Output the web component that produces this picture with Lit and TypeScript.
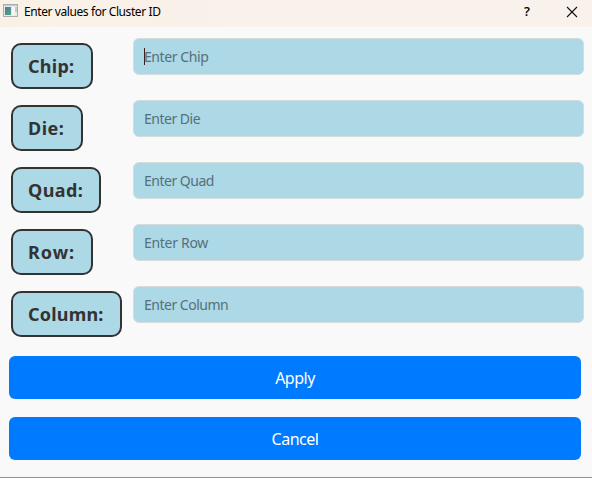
import { LitElement, html, css } from "lit";
import { customElement } from "lit/decorators.js";

interface Field {
  name: string;
  width: number;
  labelSpacing: number;
  hintSpacing: number;
}

const FIELDS: Field[] = [
  { name: "Chip", width: 82, labelSpacing: 0.25, hintSpacing: -0.42 },
  { name: "Die", width: 72, labelSpacing: 0.45, hintSpacing: -0.5 },
  { name: "Quad", width: 90, labelSpacing: 0.4, hintSpacing: -0.5 },
  { name: "Row", width: 82, labelSpacing: 1, hintSpacing: -0.3 },
  { name: "Column", width: 111, labelSpacing: 0.2, hintSpacing: -0.5 },
];

@customElement("title-bar")
class TitleBar extends LitElement {
  static styles = css`
    :host {
      display: flex;
      align-items: center;
      box-sizing: border-box;
      height: 27px;
      padding: 0 14px 3px 3px;
      background: linear-gradient(90deg, #faf1e6, #f9f1eb 50%);
      color: #000;
      font: 12px/20px "Noto Sans", "Open Sans", sans-serif;
    }
    .app-icon { flex: none; margin-right: 5px; margin-top: -2px; }
    .title { flex: 1; letter-spacing: -0.41px; white-space: nowrap; }
    .help { margin-right: 36px; font: 600 13px/18px "Open Sans", sans-serif; margin-top: -2px; }
    .close { flex: none; margin-top: -1px; }
  `;

  render() {
    return html`
      <svg class="app-icon" width="16" height="14" viewBox="0 0 16 14">
        <defs>
          <linearGradient id="pane" x1="0" y1="0" x2="1" y2="1">
            <stop offset="0" stop-color="#4b78a8" />
            <stop offset="1" stop-color="#55a77c" />
          </linearGradient>
        </defs>
        <rect x=".5" y=".5" width="14" height="12" fill="#e9e9eb" stroke="#a9adb1" />
        <rect x="1" y="1" width="13" height="1" fill="#c2cbd5" />
        <rect x="2" y="3" width="6" height="8" fill="url(#pane)" />
        <rect x="9" y="3" width="3" height="8" fill="#f7f7f8" />
        <rect x="12" y="3" width="2" height="5" fill="#b9cfc9" />
      </svg>
      <span class="title">Enter values for Cluster ID</span>
      <span class="help">?</span>
      <svg class="close" width="12" height="12" viewBox="0 0 12 12">
        <path d="M1 1L11 11M11 1L1 11" fill="none" stroke="#111" stroke-width="1.1" />
      </svg>
    `;
  }
}

@customElement("field-row")
class FieldRow extends LitElement {
  static properties = {
    field: { type: Object },
    active: { type: Boolean },
  };
  declare field: Field;
  declare active: boolean;

  static styles = css`
    :host {
      display: grid;
      grid-template-columns: 122px 1fr;
      align-items: start;
      height: 62px;
    }
    .label {
      box-sizing: border-box;
      height: 46px;
      margin-top: 5px;
      padding-left: 15px;
      border: 2px solid #333;
      border-radius: 10px;
      background: #add8e6;
      color: #333;
      font: bold 18px/43px "Noto Sans", sans-serif;
      white-space: nowrap;
    }
    .field {
      display: flex;
      align-items: center;
      box-sizing: border-box;
      height: 37px;
      padding-left: 10px;
      border: 1px solid #d6dbdc;
      border-radius: 6px;
      background: #add8e6;
      color: #56707a;
      font: 14px/20px "Noto Sans", sans-serif;
      white-space: nowrap;
    }
    .caret { width: 1px; height: 17px; margin-right: -1px; background: #401c14; }
  `;

  render() {
    const { name, width, labelSpacing, hintSpacing } = this.field;
    return html`
      <div class="label" style="width:${width}px;letter-spacing:${labelSpacing}px">${name}:</div>
      <div class="field">
        ${this.active ? html`<span class="caret"></span>` : ""}
        <span style="letter-spacing:${hintSpacing}px">Enter ${name}</span>
      </div>
    `;
  }
}

@customElement("app-root")
class AppRoot extends LitElement {
  static styles = css`
    :host {
      display: flex;
      flex-direction: column;
      box-sizing: border-box;
      height: 478px;
      border-bottom: 1px solid #929292;
      background: #f9f9f9;
      overflow: hidden;
    }
    .form { padding: 11px 8px 0 11px; }
    .actions {
      display: flex;
      flex-direction: column;
      gap: 18px;
      padding: 8px 11px 0 9px;
    }
    .button {
      box-sizing: border-box;
      height: 43px;
      padding: 2px 0 0;
      border: 0;
      border-radius: 6px;
      background: #007bff;
      color: #fff;
      font: 16px/41px "Noto Sans", sans-serif;
      letter-spacing: -0.5px;
    }
  `;

  render() {
    return html`
      <title-bar></title-bar>
      <div class="form">
        ${FIELDS.map(
          (f, i) => html`<field-row .field=${f} .active=${i === 0}></field-row>`
        )}
      </div>
      <div class="actions">
        <button class="button">Apply</button>
        <button class="button">Cancel</button>
      </div>
    `;
  }
}
